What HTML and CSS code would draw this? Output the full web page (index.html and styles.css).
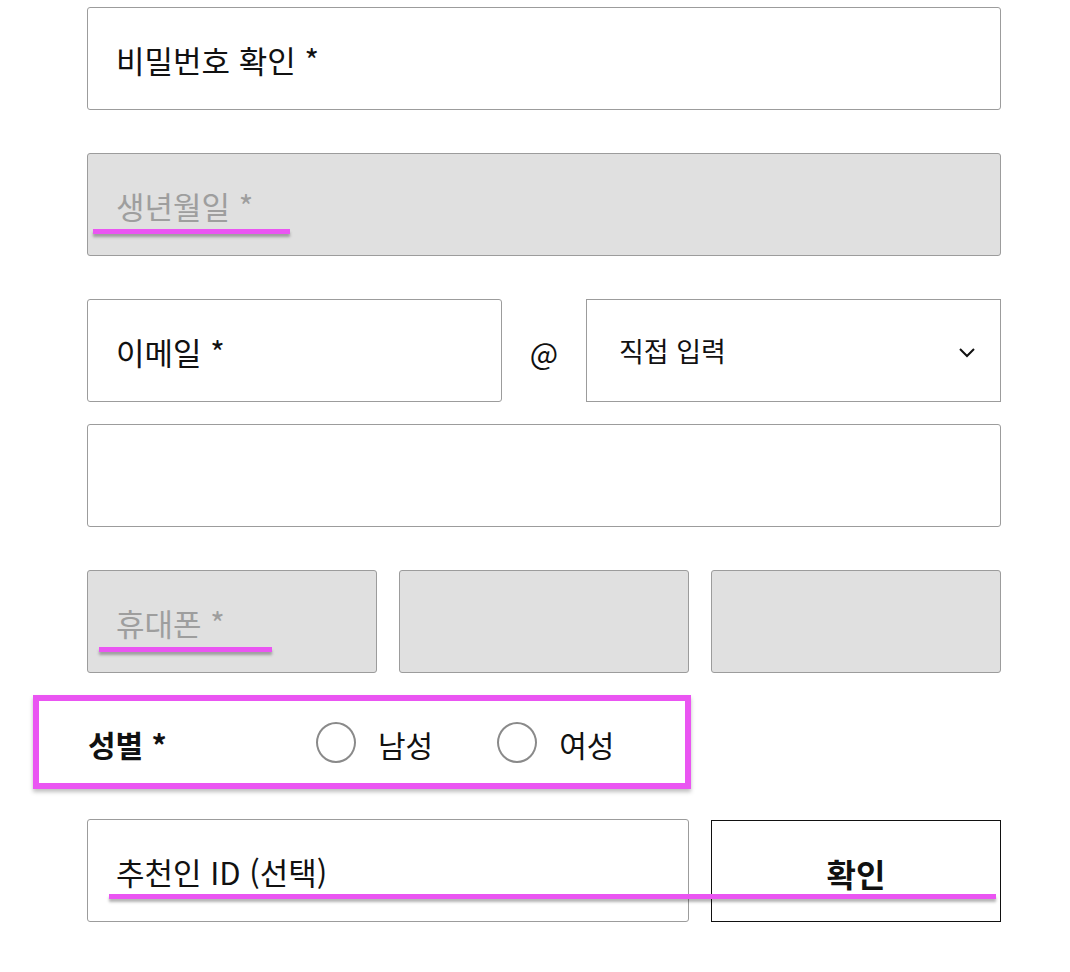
FILE: index.html
```html
<!DOCTYPE html>
<html lang="ko">
<head>
    <meta charset="UTF-8">
    <title>회원가입</title>
    <link rel="stylesheet" href="styles.css">
</head>
<body>
    <div class="signup">
        <!-- 비밀번호 확인 -->
        <div class="field">비밀번호 확인 *</div>

        <!-- 생년월일 -->
        <div class="field field-disabled">생년월일 *</div>

        <!-- 이메일 -->
        <div class="row email-row">
            <div class="field email-id">이메일 *</div>
            <span class="at">@</span>
            <div class="field select">
                <span>직접 입력</span>
                <svg class="chevron" width="18" height="11" viewBox="0 0 18 11">
                    <path d="M2 2 L9 9 L16 2" fill="none" stroke="#111" stroke-width="2"/>
                </svg>
            </div>
        </div>
        <div class="field email-domain"></div>

        <!-- 휴대폰 -->
        <div class="row phone-row">
            <div class="field field-disabled">휴대폰 *</div>
            <div class="field field-disabled"></div>
            <div class="field field-disabled"></div>
        </div>

        <!-- 성별 -->
        <div class="gender">
            <strong class="gender-label">성별 *</strong>
            <label class="radio"><span class="circle"></span>남성</label>
            <label class="radio"><span class="circle"></span>여성</label>
        </div>

        <!-- 추천인 -->
        <div class="row ref-row">
            <div class="field ref">추천인 ID (선택)</div>
            <button class="confirm">확인</button>
        </div>

        <!-- annotation marks -->
        <span class="mark mark-birth"></span>
        <span class="mark mark-phone"></span>
        <span class="mark mark-ref"></span>
    </div>
</body>
</html>
```

FILE: styles.css
```css
* {
    margin: 0;
    padding: 0;
    box-sizing: border-box;
}

body {
    font-family: "Noto Sans CJK KR", "Noto Sans", sans-serif;
    background-color: #fff;
    color: #111;
}

.signup {
    position: relative;
    width: 914px;
    margin-left: 87px;
    padding-top: 7px;
}

/* Inputs */
.field {
    height: 103px;
    border: 1px solid #9c9c9c;
    border-radius: 3px;
    padding: 2px 28px 0;
    display: flex;
    align-items: center;
    font-size: 31px;
    background-color: #fff;
    margin-bottom: 43px;
}

.field-disabled {
    background-color: #e0e0e0;
    color: #9e9e9e;
}

.row {
    display: flex;
    align-items: center;
    margin-bottom: 43px;
}

.row .field {
    margin-bottom: 0;
}

.email-row {
    margin-bottom: 22px;
}

.email-id {
    width: 415px;
}

.at {
    width: 84px;
    text-align: center;
    font-size: 30px;
    padding-top: 2px;
}

.select {
    flex: 1;
    border-radius: 0;
    justify-content: space-between;
    font-size: 27px;
    padding: 0 24px 0 32px;
}

.chevron {
    margin-top: 4px;
}

.email-domain {
    margin-bottom: 43px;
}

.phone-row {
    gap: 22px;
    margin-bottom: 22px;
}

.phone-row .field {
    flex: 1;
}

/* Gender */
.gender {
    display: flex;
    align-items: center;
    width: 658px;
    height: 94px;
    margin-left: -54px;
    margin-bottom: 30px;
    padding-left: 49px;
    padding-top: 4px;
    border: 6px solid #ea55f2;
    box-shadow: 0 3px 4px rgba(0, 0, 0, 0.25);
    font-size: 30px;
}

.gender-label {
    width: 228px;
    font-size: 30px;
}

.radio {
    display: flex;
    align-items: center;
    gap: 22px;
    margin-right: 64px;
}

.circle {
    width: 40px;
    height: 41px;
    border: 2px solid #8a8a8a;
    border-radius: 50%;
    margin-top: -4px;
}

/* Recommender */
.ref-row {
    gap: 22px;
}

.ref {
    flex: 1;
}

.confirm {
    width: 290px;
    height: 102px;
    border: 1px solid #111;
    background-color: #fff;
    font-family: inherit;
    font-size: 32px;
    font-weight: bold;
    color: #111;
    padding-top: 4px;
}

/* Pink review marks over the form */
.mark {
    position: absolute;
    height: 5px;
    background-color: #ea55f2;
    box-shadow: 0 3px 3px rgba(0, 0, 0, 0.3);
}

.mark-birth {
    left: 6px;
    top: 229px;
    width: 197px;
}

.mark-phone {
    left: 12px;
    top: 647px;
    width: 173px;
}

.mark-ref {
    left: 22px;
    top: 894px;
    width: 887px;
}
```
